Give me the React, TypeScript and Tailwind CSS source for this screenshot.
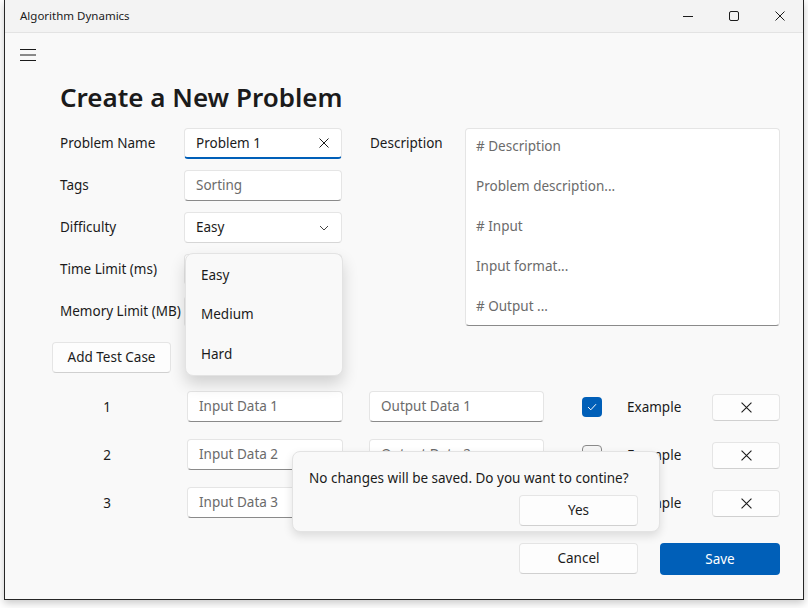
import React from "react";

const ink = "text-[#1b1b1b]";

function XIcon({ size = 11, stroke = 1 }: { size?: number; stroke?: number }) {
  return (
    <svg width={size} height={size} viewBox="0 0 10 10" fill="none">
      <path d="M0.5 0.5 L9.5 9.5 M9.5 0.5 L0.5 9.5" stroke="#1b1b1b" strokeWidth={stroke} />
    </svg>
  );
}

function Chevron() {
  return (
    <svg width="10" height="6" viewBox="0 0 10 6" fill="none">
      <path d="M1 1 L5 5 L9 1" stroke="#444" strokeWidth="1" />
    </svg>
  );
}

type BoxProps = {
  text: string;
  w: string;
  placeholder?: boolean;
  focused?: boolean;
  clear?: boolean;
  chevron?: boolean;
};

function TextBox({ text, w, placeholder, focused, clear, chevron }: BoxProps) {
  const base = `${w} h-[31px] shrink-0 rounded-[4px] bg-white border border-[#e5e5e5] flex items-center justify-between pl-[11px] pr-[12px] text-[13.5px]`;
  const bottom = focused ? "border-b-2 border-b-[#005fb8]" : chevron ? "border-b-[#d6d6d6]" : "border-b-[#8a8a8a]";
  return (
    <div className={`${base} ${bottom}`}>
      <span className={placeholder ? "text-[#6b6b6b]" : ink}>{text}</span>
      {clear && <XIcon size={10} />}
      {chevron && <Chevron />}
    </div>
  );
}

function Button({ label, w, accent }: { label: string; w: string; accent?: boolean }) {
  if (accent) {
    return (
      <div className={`${w} h-[32px] rounded-[4px] bg-[#005fb8] text-white flex items-center justify-center text-[13.5px]`}>
        {label}
      </div>
    );
  }
  return (
    <div
      className={`${w} h-[31px] rounded-[4px] bg-[#fdfdfd] border border-[#e5e5e5] border-b-[#d0d0d0] flex items-center justify-center text-[13.5px] ${ink}`}
    >
      {label}
    </div>
  );
}

function Checkbox({ checked }: { checked: boolean }) {
  if (checked) {
    return (
      <div className="w-[20px] h-[20px] shrink-0 rounded-[4px] bg-[#005fb8] flex items-center justify-center">
        <svg width="10" height="8" viewBox="0 0 10 8" fill="none">
          <path d="M1 4 L3.8 6.8 L9 1.2" stroke="white" strokeWidth="1" />
        </svg>
      </div>
    );
  }
  return <div className="w-[20px] h-[20px] shrink-0 rounded-[4px] bg-[#f5f5f5] border border-[#8a8a8a]" />;
}

// time / memory boxes sit under the open dropdown, so they show no text
const fields = [
  { label: "Problem Name", text: "Problem 1", focused: true, clear: true },
  { label: "Tags", text: "Sorting", placeholder: true },
  { label: "Difficulty", text: "Easy", chevron: true },
  { label: "Time Limit (ms)", text: "" },
  { label: "Memory Limit (MB)", text: "" },
];

const descLines = ["# Description", "", "Problem description...", "", "# Input", "", "Input format...", "", "# Output ..."];

const tests = [1, 2, 3];

export default function App() {
  return (
    <div className="w-[808px] h-[608px] bg-white font-['Noto_Sans',sans-serif] overflow-hidden">
      <div className="relative ml-[4px] w-[800px] h-[600px] bg-[#f9f9f9] border-x border-b border-[#262626] shadow-[0_3px_8px_rgba(0,0,0,0.22)] flex flex-col">
        {/* title bar */}
        <div className="h-[33px] shrink-0 bg-[#f3f3f3] border-b border-[#e3e3e3] flex items-center justify-between">
          <span className={`pl-[15px] text-[11.5px] ${ink}`}>Algorithm Dynamics</span>
          <div className="flex h-full">
            <div className="w-[46px] flex items-center justify-center">
              <div className="w-[10px] h-px bg-[#1b1b1b]" />
            </div>
            <div className="w-[46px] flex items-center justify-center">
              <div className="w-[10px] h-[10px] border border-[#1b1b1b] rounded-[2px]" />
            </div>
            <div className="w-[46px] flex items-center justify-center">
              <XIcon size={10} />
            </div>
          </div>
        </div>

        {/* hamburger */}
        <div className="h-[44px] shrink-0 pl-[15px] flex items-center">
          <svg width="16" height="12" viewBox="0 0 16 12" fill="none">
            <path d="M0 0.5 H16 M0 6 H16 M0 11.5 H16" stroke="#1b1b1b" strokeWidth="1" />
          </svg>
        </div>

        <h1 className={`mt-[2px] pl-[55px] h-[36px] leading-[36px] text-[26px] font-semibold ${ink}`}>
          Create a New Problem
        </h1>

        {/* form */}
        <div className="mt-[13px] pl-[55px] flex items-start">
          <div className="flex flex-col gap-[11px]">
            {fields.map((f) => (
              <div key={f.label} className="flex items-center h-[31px]">
                <span className={`w-[124px] text-[13.5px] ${ink}`}>{f.label}</span>
                <TextBox
                  text={f.text}
                  w="w-[158px]"
                  focused={f.focused}
                  clear={f.clear}
                  chevron={f.chevron}
                  placeholder={f.placeholder}
                />
              </div>
            ))}
          </div>
          <span className={`ml-[28px] w-[95px] h-[31px] flex items-center text-[13.5px] ${ink}`}>Description</span>
          <div className="w-[315px] h-[198px] rounded-[4px] bg-white border border-[#e5e5e5] border-b-[#8a8a8a] pt-[7px] pl-[10px] text-[13.5px] leading-[20px] text-[#6b6b6b]">
            {descLines.map((l, i) => (
              <div key={i} className="h-[20px]">
                {l}
              </div>
            ))}
          </div>
        </div>

        <div className="mt-[15px] pl-[47px]">
          <Button label="Add Test Case" w="w-[119px]" />
        </div>

        {/* test cases */}
        <div className="mt-[17px] flex flex-col gap-[16px]">
          {tests.map((n) => (
            <div key={n} className="h-[32px] pl-[55px] flex items-center">
              <span className={`w-[94px] pt-[3px] text-center text-[13.5px] ${ink}`}>{n}</span>
              <div className="ml-[33px]">
                <TextBox text={`Input Data ${n}`} w="w-[156px]" placeholder />
              </div>
              <div className="ml-[26px]">
                <TextBox text={`Output Data ${n}`} w="w-[175px]" placeholder />
              </div>
              <div className="ml-[38px] pt-[2px]">
                <Checkbox checked={n === 1} />
              </div>
              <span className={`ml-[25px] w-[85px] pt-[3px] text-[13.5px] ${ink}`}>Example</span>
              <div className="mt-[3px] w-[68px] h-[27px] rounded-[4px] bg-[#fdfdfd] border border-[#e5e5e5] border-b-[#d0d0d0] flex items-center justify-center">
                <XIcon size={11} />
              </div>
            </div>
          ))}
        </div>

        {/* bottom buttons */}
        <div className="mt-[25px] pr-[23px] flex justify-end gap-[22px]">
          <Button label="Cancel" w="w-[119px]" />
          <Button label="Save" w="w-[120px]" accent />
        </div>

        {/* difficulty dropdown */}
        <div className="absolute left-[180px] top-[253px] w-[158px] h-[123px] rounded-[8px] bg-[#f9f9f9] border border-[#e3e3e3] shadow-[0_8px_16px_rgba(0,0,0,0.16)] py-[1px] flex flex-col">
          {["Easy", "Medium", "Hard"].map((o) => (
            <div key={o} className={`h-[40px] pl-[15px] flex items-center text-[13.5px] ${ink}`}>
              {o}
            </div>
          ))}
        </div>

        {/* confirm flyout */}
        <div className="absolute left-[287px] top-[451px] w-[368px] h-[81px] rounded-[8px] bg-[#f9f9f9] border border-[#e3e3e3] shadow-[0_4px_10px_rgba(0,0,0,0.12)] pl-[16px] pr-[21px] pt-[15px] flex flex-col">
          <span className={`h-[22px] flex items-center text-[13.5px] ${ink}`}>
            No changes will be saved. Do you want to contine?
          </span>
          <div className="mt-[6px] flex justify-end">
            <Button label="Yes" w="w-[119px]" />
          </div>
        </div>
      </div>
    </div>
  );
}
